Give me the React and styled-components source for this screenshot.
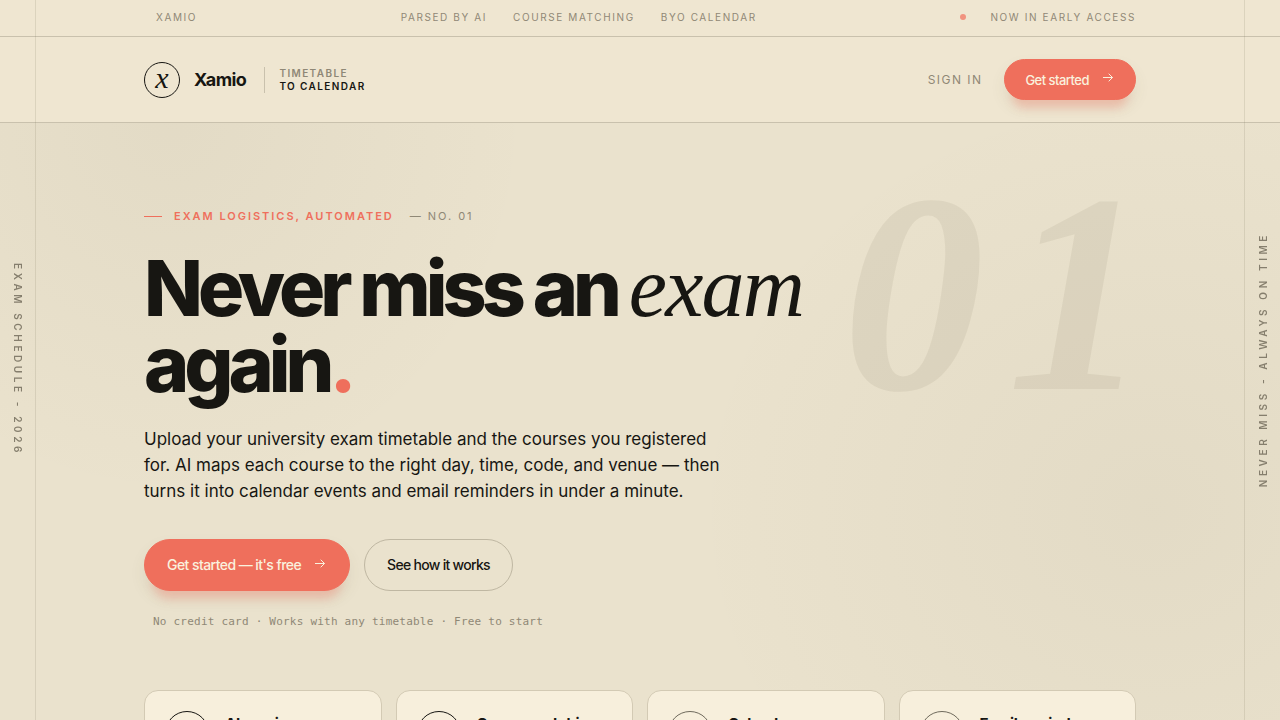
import React from "react";
import styled, { createGlobalStyle, css } from "styled-components";

const ink = "#171612";
const muted = "#8f8876";
const coral = "#ef6f5c";
const paper = "#efe6d1";
const rule = "#c9c1ad";
const serif = '"Liberation Serif", "Times New Roman", serif';

const GlobalStyle = createGlobalStyle`
  *, *::before, *::after { box-sizing: border-box; }
  body {
    margin: 0;
    background: #eae2cd;
    color: ${ink};
    font-family: Inter, "Liberation Sans", sans-serif;
    -webkit-font-smoothing: antialiased;
  }
  h1, h2, p, ul { margin: 0; padding: 0; }
  a { color: inherit; text-decoration: none; }
`;

const Page = styled.div`
  position: relative;
  min-height: 100vh;
  background:
    radial-gradient(ellipse 360px 380px at 170px 120px, rgba(92, 84, 60, 0.05), transparent 100%),
    radial-gradient(ellipse 460px 420px at 90% 510px, rgba(92, 84, 60, 0.05), transparent 100%);
`;

const Rail = styled.aside`
  position: fixed;
  top: 0;
  bottom: 0;
  z-index: 2;
  width: 36px;
  display: flex;
  align-items: center;
  justify-content: center;
  font-size: 10px;
  line-height: 12px;
  font-weight: 600;
  letter-spacing: 0.36em;
  color: #857e6d;
  pointer-events: none;
  ${({ $side }) =>
    $side === "left"
      ? css`left: 0; border-right: 1px solid rgba(120, 110, 85, 0.16);`
      : css`right: 0; border-left: 1px solid rgba(120, 110, 85, 0.16);`}
`;

const RailText = styled.span`
  writing-mode: vertical-rl;
  white-space: nowrap;
  transform: ${({ $flip }) => ($flip ? "rotate(180deg)" : "none")};
`;

const Container = styled.div`
  max-width: 1120px;
  margin: 0 auto;
  padding: 0 64px;
`;

const TopBar = styled.div`
  background: ${paper};
  border-bottom: 1px solid ${rule};
`;

const TopBarInner = styled(Container)`
  display: flex;
  align-items: center;
  justify-content: space-between;
  height: 36px;
  padding-bottom: 2px;
  font-size: 10px;
  line-height: 14px;
  letter-spacing: 0.16em;
  color: ${muted};
`;

const TopBrand = styled.span`
  padding-left: 12px;
`;

const TopList = styled.ul`
  display: flex;
  gap: 26px;
  list-style: none;
`;

const Status = styled.span`
  display: flex;
  align-items: center;
  gap: 24px;
`;

const StatusDot = styled.span`
  width: 6px;
  height: 6px;
  border-radius: 50%;
  background: #f1937f;
`;

const Header = styled.header`
  background: ${paper};
  border-bottom: 1px solid ${rule};
`;

const HeaderInner = styled(Container)`
  display: flex;
  align-items: center;
  justify-content: space-between;
  height: 85px;
`;

const Brand = styled.a`
  display: flex;
  align-items: center;
`;

const Mark = styled.span`
  display: flex;
  align-items: center;
  justify-content: center;
  width: 36px;
  height: 36px;
  padding-bottom: 4px;
  border: 1px solid ${ink};
  border-radius: 50%;
  font: italic 30px/30px ${serif};
`;

const BrandName = styled.span`
  margin-left: 14px;
  font-size: 18px;
  line-height: 24px;
  font-weight: 700;
  letter-spacing: -0.03em;
`;

const Tagline = styled.span`
  margin-left: 18px;
  padding-left: 14px;
  border-left: 1px solid ${rule};
  font-size: 10px;
  line-height: 13px;
  font-weight: 600;
  letter-spacing: 0.14em;
  color: ${muted};

  strong {
    display: block;
    font-weight: 600;
    color: ${ink};
  }
`;

const Nav = styled.nav`
  display: flex;
  align-items: center;
  gap: 22px;
`;

const SignIn = styled.a`
  font-size: 12px;
  line-height: 16px;
  letter-spacing: 0.12em;
  color: ${muted};
`;

const Button = styled.button`
  display: inline-flex;
  align-items: center;
  justify-content: center;
  gap: 14px;
  height: ${({ $large }) => ($large ? "52px" : "41px")};
  padding: ${({ $large }) => ($large ? "0 22px" : "0 20px")};
  border: 1px solid ${({ $ghost }) => ($ghost ? "#bfb7a2" : coral)};
  border-radius: 26px;
  background: ${({ $ghost }) => ($ghost ? "transparent" : coral)};
  color: ${({ $ghost }) => ($ghost ? ink : "#faf1de")};
  box-shadow: ${({ $ghost }) =>
    $ghost ? "none" : "0 16px 8px -8px rgba(243, 130, 112, 0.34), 0 8px 16px rgba(92, 84, 60, 0.08)"};
  font-family: inherit;
  font-size: ${({ $large }) => ($large ? "14px" : "13px")};
  line-height: 20px;
  font-weight: 500;
  letter-spacing: ${({ $ghost }) => ($ghost ? "-0.05em" : "-0.04em")};
  white-space: nowrap;
  cursor: pointer;

  svg {
    margin-bottom: 4px;
  }
`;

const Hero = styled.main`
  position: relative;
`;

const HeroInner = styled(Container)`
  position: relative;
  padding-top: 85px;
`;

const Numeral = styled.span`
  position: absolute;
  top: 28px;
  right: 28px;
  z-index: 0;
  font: italic 700 284px/284px ${serif};
  letter-spacing: 0.08em;
  color: rgba(92, 80, 56, 0.08);
  pointer-events: none;
`;

const HeroCopy = styled.section`
  position: relative;
  z-index: 1;
`;

const Eyebrow = styled.p`
  display: flex;
  align-items: center;
  font-size: 11px;
  line-height: 16px;
  font-weight: 600;
  letter-spacing: 0.18em;
  color: ${coral};

  &::before {
    content: "";
    width: 18px;
    height: 1px;
    margin-right: 12px;
    background: ${coral};
  }
`;

const EyebrowNote = styled.span`
  margin-left: 16px;
  font-weight: 400;
  color: ${muted};
`;

const Title = styled.h1`
  max-width: 700px;
  margin-top: 26px;
  font-size: 77px;
  line-height: 76px;
  font-weight: 800;
  letter-spacing: -0.065em;

  em {
    font-family: ${serif};
    font-size: 86px;
    line-height: 60px;
    font-weight: 400;
    letter-spacing: -0.02em;
  }
`;

const Period = styled.span`
  color: ${coral};
`;

const Lead = styled.p`
  max-width: 590px;
  margin-top: 24px;
  font-size: 17px;
  line-height: 26px;
`;

const Actions = styled.div`
  display: flex;
  gap: 14px;
  margin-top: 35px;
`;

const Note = styled.p`
  margin-top: 23px;
  padding-left: 9px;
  font-family: "DejaVu Sans Mono", monospace;
  font-size: 11px;
  line-height: 16px;
  letter-spacing: 0.02em;
  color: ${muted};
`;

const Cards = styled.section`
  display: grid;
  grid-template-columns: repeat(4, 1fr);
  gap: 14px;
  margin-top: 60px;
  padding-bottom: 60px;
`;

const Card = styled.article`
  display: flex;
  gap: 16px;
  padding: 20px;
  border: 1px solid #d3cab4;
  border-radius: 14px;
  background: #f7efdc;
`;

const CardIcon = styled.span`
  display: flex;
  align-items: center;
  justify-content: center;
  flex: none;
  width: 44px;
  height: 44px;
  border: 1px solid ${({ $soft }) => ($soft ? "#6f6a5c" : ink)};
  border-radius: 50%;
`;

const CardTitle = styled.h2`
  padding-top: 4px;
  font-size: 15px;
  line-height: 18px;
  font-weight: 700;
  letter-spacing: -0.02em;
`;

const Arrow = () => (
  <svg width="12" height="9" viewBox="0 0 12 9" fill="none" stroke="currentColor" aria-hidden="true">
    <path d="M0 4.5H9.5M5.7 0.7L9.5 4.5L5.7 8.3" />
  </svg>
);

const icons = {
  parse: "M5 2h7l4 4v12H5zM8 10h5M8 14h5",
  match: "M3 10l4 4 9-9",
  calendar: "M3 4h14v13H3zM3 8h14M7 2v4M13 2v4",
  mail: "M2 5h16v11H2zM2 5l8 6 8-6",
};

const features = [
  { title: "AI parsing", icon: "parse" },
  { title: "Course matching", icon: "match" },
  { title: "Calendar sync", icon: "calendar", soft: true },
  { title: "Email reminders", icon: "mail", soft: true },
];

export default function App() {
  return (
    <>
      <GlobalStyle />
      <Page>
        <Rail $side="left"><RailText>EXAM SCHEDULE - 2026</RailText></Rail>
        <Rail $side="right"><RailText $flip>NEVER MISS - ALWAYS ON TIME</RailText></Rail>
        <TopBar>
          <TopBarInner>
            <TopBrand>XAMIO</TopBrand>
            <TopList>
              <li>PARSED BY AI</li>
              <li>COURSE MATCHING</li>
              <li>BYO CALENDAR</li>
            </TopList>
            <Status><StatusDot />NOW IN EARLY ACCESS</Status>
          </TopBarInner>
        </TopBar>
        <Header>
          <HeaderInner>
            <Brand href="#">
              <Mark>x</Mark>
              <BrandName>Xamio</BrandName>
              <Tagline>TIMETABLE<strong>TO CALENDAR</strong></Tagline>
            </Brand>
            <Nav>
              <SignIn href="#">SIGN IN</SignIn>
              <Button type="button">Get started<Arrow /></Button>
            </Nav>
          </HeaderInner>
        </Header>
        <Hero>
          <HeroInner>
            <Numeral aria-hidden="true">01</Numeral>
            <HeroCopy>
              <Eyebrow>EXAM LOGISTICS, AUTOMATED<EyebrowNote>— NO. 01</EyebrowNote></Eyebrow>
              <Title>Never miss an <em>exam</em> again<Period>.</Period></Title>
              <Lead>
                Upload your university exam timetable and the courses you registered for. AI maps
                each course to the right day, time, code, and venue — then turns it into calendar
                events and email reminders in under a minute.
              </Lead>
              <Actions>
                <Button type="button" $large>Get started — it's free<Arrow /></Button>
                <Button type="button" $large $ghost>See how it works</Button>
              </Actions>
              <Note>No credit card · Works with any timetable · Free to start</Note>
            </HeroCopy>
            <Cards>
              {features.map(({ title, icon, soft }) => (
                <Card key={title}>
                  <CardIcon $soft={soft}>
                    <svg width="20" height="20" viewBox="0 0 20 20" fill="none" stroke={ink} aria-hidden="true">
                      <path d={icons[icon]} />
                    </svg>
                  </CardIcon>
                  <CardTitle>{title}</CardTitle>
                </Card>
              ))}
            </Cards>
          </HeroInner>
        </Hero>
      </Page>
    </>
  );
}
